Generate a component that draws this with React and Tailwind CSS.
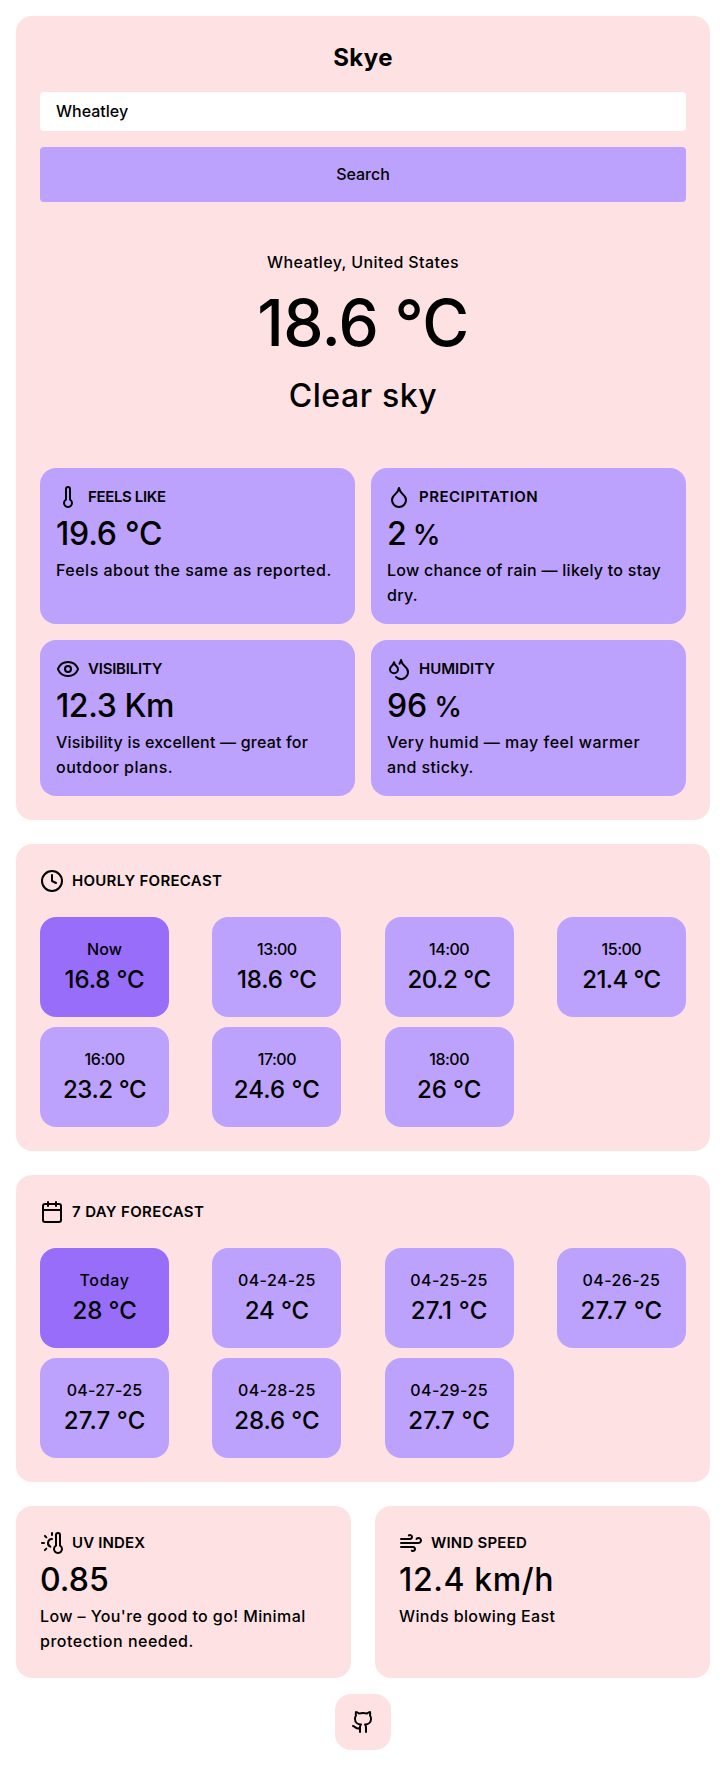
import React from "react";
import {
  Calendar,
  Clock,
  Droplet,
  Droplets,
  Eye,
  Github,
  Thermometer,
  ThermometerSun,
  Wind,
} from "lucide-react";

const stats = [
  {
    icon: Thermometer,
    title: "FEELS LIKE",
    titleClass: "tracking-[-0.36px]",
    value: "19.6 °C",
    valueClass: "tracking-[-0.22px]",
    lines: [["Feels about the same as reported.", "tracking-[0.49px]"]],
  },
  {
    icon: Droplet,
    title: "PRECIPITATION",
    titleClass: "tracking-[0.5px]",
    value: "2",
    unit: "%",
    valueClass: "tracking-[-0.7px]",
    lines: [
      ["Low chance of rain — likely to stay", "tracking-[0.26px]"],
      ["dry.", "tracking-[0.28px]"],
    ],
  },
  {
    icon: Eye,
    title: "VISIBILITY",
    titleClass: "tracking-[-0.22px]",
    value: "12.3 Km",
    valueClass: "tracking-[-0.41px]",
    lines: [
      ["Visibility is excellent — great for", "tracking-[0.2px]"],
      ["outdoor plans.", "tracking-[0.48px]"],
    ],
  },
  {
    icon: Droplets,
    title: "HUMIDITY",
    titleClass: "tracking-[0px]",
    value: "96",
    unit: "%",
    valueClass: "tracking-[-0.2px]",
    lines: [
      ["Very humid — may feel warmer", "tracking-[0.49px]"],
      ["and sticky.", "tracking-[0.39px]"],
    ],
  },
];

const extras = [
  {
    icon: ThermometerSun,
    title: "UV INDEX",
    titleClass: "tracking-[0.15px]",
    value: "0.85",
    valueClass: "tracking-[0.05px]",
    lines: [
      ["Low – You're good to go! Minimal", "tracking-[0.4px]"],
      ["protection needed.", "tracking-[0.5px]"],
    ],
  },
  {
    icon: Wind,
    title: "WIND SPEED",
    titleClass: "tracking-[0.21px]",
    value: "12.4 km/h",
    valueClass: "tracking-[0.6px]",
    lines: [["Winds blowing East", "tracking-[0.37px]"]],
  },
];

const hourly = [
  ["Now", "16.8 °C", "tracking-[0.1px]", "tracking-[-0.1px]"],
  ["13:00", "18.6 °C", "tracking-[-0.5px]", "tracking-[-0.15px]"],
  ["14:00", "20.2 °C", "tracking-[-0.5px]", "tracking-[-0.45px]"],
  ["15:00", "21.4 °C", "tracking-[-0.5px]", "tracking-[-0.6px]"],
  ["16:00", "23.2 °C", "tracking-[-0.4px]", "tracking-[-0.4px]"],
  ["17:00", "24.6 °C", "tracking-[-0.5px]", "tracking-[0.05px]"],
  ["18:00", "26 °C", "tracking-[-0.5px]", "tracking-[-0.1px]"],
];

const daily = [
  ["Today", "28 °C", "tracking-[0.7px]", "tracking-[-0.05px]"],
  ["04-24-25", "24 °C", "tracking-[0.42px]", "tracking-[-0.1px]"],
  ["04-25-25", "27.1 °C", "tracking-[0.42px]", "tracking-[0.2px]"],
  ["04-26-25", "27.7 °C", "tracking-[0.42px]", "tracking-[0.12px]"],
  ["04-27-25", "27.7 °C", "tracking-[0.3px]", "tracking-[0.12px]"],
  ["04-28-25", "28.6 °C", "tracking-[0.42px]", "tracking-[-0.08px]"],
  ["04-29-25", "27.7 °C", "tracking-[0.42px]", "tracking-[0.12px]"],
];

function Heading({ icon: Icon, className, children }) {
  return (
    <h2 className="flex h-[25px] items-center gap-2 text-[15px] leading-[25px] font-semibold whitespace-nowrap">
      <Icon size={24} strokeWidth={2} className="shrink-0" />
      <span className={className}>{children}</span>
    </h2>
  );
}

function Stat({ item, className }) {
  return (
    <article className={className}>
      <Heading icon={item.icon} className={item.titleClass}>
        {item.title}
      </Heading>
      <p className={`h-[49px] text-[32px] leading-[49px] ${item.valueClass}`}>
        {item.value}
        {item.unit && <span className="text-[28px]"> {item.unit}</span>}
      </p>
      <p className="leading-[25px]">
        {item.lines.map(([text, tracking]) => (
          <span key={text} className={`block whitespace-nowrap ${tracking}`}>
            {text}
          </span>
        ))}
      </p>
    </article>
  );
}

function Forecast({ icon, title, titleClass, items }) {
  return (
    <section className="rounded-2xl bg-[#fee2e3] p-6">
      <Heading icon={icon} className={titleClass}>
        {title}
      </Heading>
      <div className="mt-6 grid grid-cols-[repeat(4,20%)] justify-between gap-y-2.5">
        {items.map(([label, value, labelClass, valueClass], i) => (
          <div
            key={label}
            className={`flex h-[100px] flex-col items-center justify-center rounded-2xl whitespace-nowrap ${
              i === 0 ? "bg-[#986dfa]" : "bg-[#bca2fc]"
            }`}
          >
            <p className={`leading-[25px] ${labelClass}`}>{label}</p>
            <p className={`text-2xl leading-9 ${valueClass}`}>{value}</p>
          </div>
        ))}
      </div>
    </section>
  );
}

export default function App() {
  return (
    <div className="min-h-[1766px] bg-white p-4 font-['Inter',sans-serif] text-base font-medium text-black">
      <main className="flex flex-col gap-6">
        <section className="rounded-2xl bg-[#fee2e3] p-6">
          <h1 className="text-center text-2xl leading-9 font-bold tracking-[0.39px]">Skye</h1>
          <form className="mt-4 flex flex-col gap-4" onSubmit={(e) => e.preventDefault()}>
            <input
              defaultValue="Wheatley"
              className="h-[39px] rounded bg-white px-4 pb-0.5 outline-none"
            />
            <button className="h-[55px] rounded bg-[#bca2fc] pb-px">Search</button>
          </form>
          <div className="my-12 text-center">
            <p className="leading-[25px] tracking-[0.39px]">Wheatley, United States</p>
            <p className="text-[64px] leading-[96px] tracking-[-0.65px]">18.6 °C</p>
            <p className="text-[32px] leading-[49px] tracking-[0.6px]">Clear sky</p>
          </div>
          <div className="grid grid-cols-2 gap-4">
            {stats.map((item) => (
              <Stat
                key={item.title}
                item={item}
                className="h-[156px] rounded-2xl bg-[#bca2fc] p-4"
              />
            ))}
          </div>
        </section>

        <Forecast
          icon={Clock}
          title="HOURLY FORECAST"
          titleClass="tracking-[0.29px]"
          items={hourly}
        />
        <Forecast
          icon={Calendar}
          title="7 DAY FORECAST"
          titleClass="tracking-[0.36px]"
          items={daily}
        />

        <div className="grid grid-cols-2 gap-6">
          {extras.map((item) => (
            <Stat
              key={item.title}
              item={item}
              className="h-[172px] rounded-2xl bg-[#fee2e3] p-6"
            />
          ))}
        </div>
      </main>
      <footer className="mt-4 flex justify-center">
        <a className="rounded-2xl bg-[#fee2e3] p-4" aria-label="GitHub">
          <Github size={24} />
        </a>
      </footer>
    </div>
  );
}
